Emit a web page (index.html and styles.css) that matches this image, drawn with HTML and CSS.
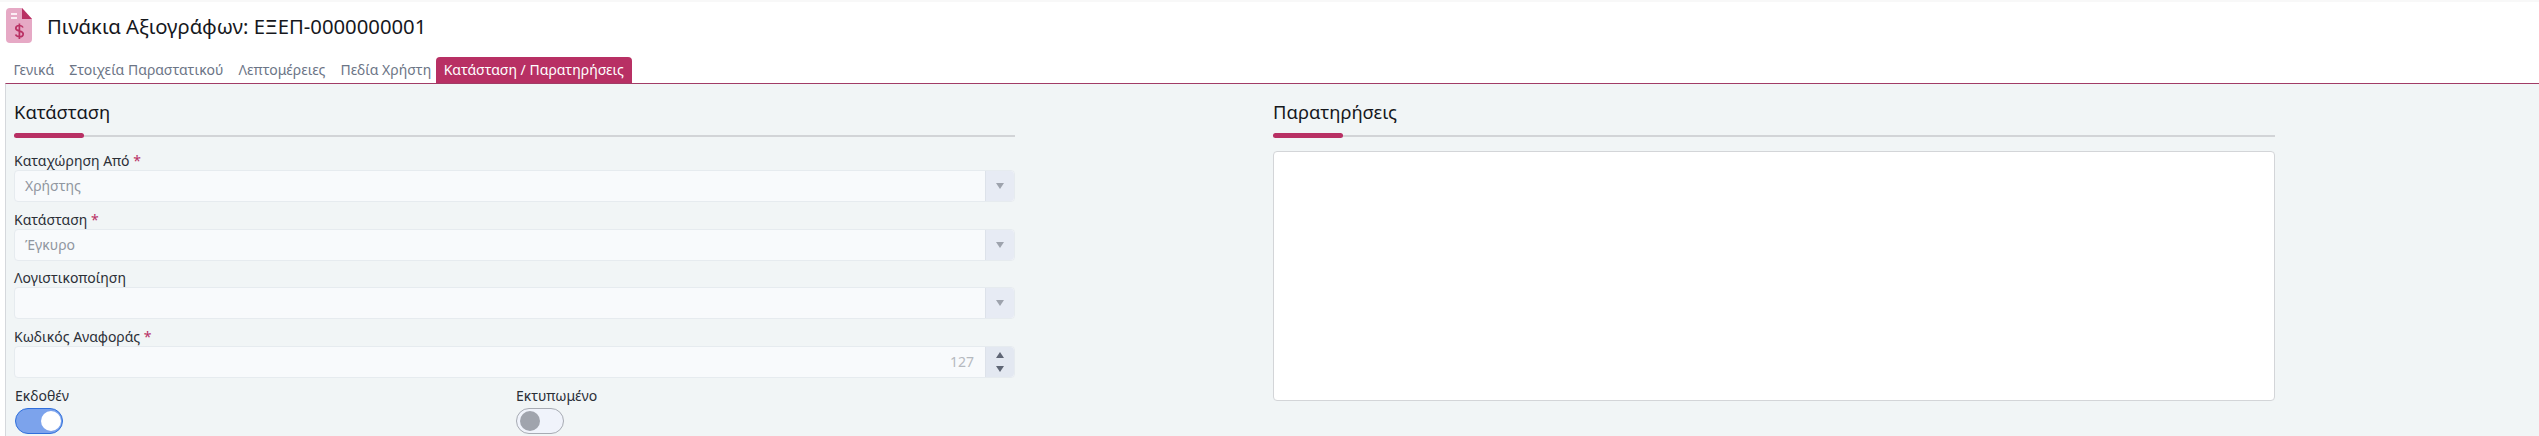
FILE: index.html
```html
<!DOCTYPE html>
<html lang="el">
<head>
  <meta charset="UTF-8" />
  <title>Πινάκια Αξιογράφων</title>
  <link rel="stylesheet" href="styles.css">
</head>
<body>
  <div class="page-header">
    <svg class="doc-icon" viewBox="0 0 26 35" width="26" height="35">
      <path d="M4 0H16L26 11V31a4 4 0 0 1-4 4H4a4 4 0 0 1-4-4V4a4 4 0 0 1 4-4Z" fill="#e6a9c5"/>
      <path d="M16 0L26 11H16Z" fill="#b93063"/>
      <rect x="5" y="5" width="6" height="2" fill="#fbeef4"/>
      <rect x="5" y="9" width="6" height="2" fill="#fbeef4"/>
      <path d="M17 19.5c-.6-1.4-2-2-3.6-2-2 0-3.6 1-3.6 2.8 0 3.8 7.4 1.8 7.4 5.6 0 1.8-1.7 2.8-3.7 2.8-1.8 0-3.3-.8-3.9-2.2M13.4 15.5v15.5" fill="none" stroke="#b93063" stroke-width="1.7"/>
    </svg>
    <h1>Πινάκια Αξιογράφων: ΕΞΕΠ-0000000001</h1>
  </div>

  <div class="tabs">
    <a class="tab">Γενικά</a>
    <a class="tab">Στοιχεία Παραστατικού</a>
    <a class="tab">Λεπτομέρειες</a>
    <a class="tab">Πεδία Χρήστη</a>
    <a class="tab active">Κατάσταση / Παρατηρήσεις</a>
  </div>

  <div class="panel">
    <section class="col">
      <h2 class="section-title">Κατάσταση</h2>
      <div class="section-rule"></div>

      <label class="field-label">Καταχώρηση Από <span class="req">*</span></label>
      <div class="control">
        <div class="value">Χρήστης</div>
        <div class="addon"><span class="caret-down"></span></div>
      </div>

      <label class="field-label">Κατάσταση <span class="req">*</span></label>
      <div class="control">
        <div class="value">Έγκυρο</div>
        <div class="addon"><span class="caret-down"></span></div>
      </div>

      <label class="field-label">Λογιστικοποίηση</label>
      <div class="control">
        <div class="value"></div>
        <div class="addon"><span class="caret-down"></span></div>
      </div>

      <label class="field-label">Κωδικός Αναφοράς <span class="req">*</span></label>
      <div class="control">
        <div class="value number">127</div>
        <div class="addon spinner">
          <span class="caret-up dark"></span>
          <span class="caret-down dark"></span>
        </div>
      </div>

      <div class="toggles">
        <div>
          <div class="toggle-label">Εκδοθέν</div>
          <div class="toggle on"><span class="knob"></span></div>
        </div>
        <div>
          <div class="toggle-label">Εκτυπωμένο</div>
          <div class="toggle"><span class="knob"></span></div>
        </div>
      </div>
    </section>

    <section class="col">
      <h2 class="section-title">Παρατηρήσεις</h2>
      <div class="section-rule"></div>
      <div class="notes"></div>
    </section>
  </div>
</body>
</html>
```

FILE: styles.css
```css
html, body {
  margin: 0;
  height: 436px;
  overflow: hidden;
}

body {
  font-family: "Noto Sans", "Open Sans", sans-serif;
  background: #fff;
  color: #212529;
}

.page-header {
  display: flex;
  align-items: center;
  gap: 15px;
  height: 57px;
  padding: 0 6px 8px;
  box-sizing: border-box;
  border-top: 2px solid #f8f8f8;
}

.page-header h1 {
  margin: 0;
  font-size: 20.3px;
  font-weight: 400;
  color: #16181d;
}

.tabs {
  display: flex;
  height: 26px;
  margin-left: 6px;
}

.tab {
  display: flex;
  align-items: center;
  padding: 0 7.5px 1px;
  font-size: 14px;
  color: #6c7586;
}

.tab.active {
  margin-left: -3px;
  padding: 0 8px 1px;
  background: #b83064;
  color: #fff;
  border-radius: 4px 4px 0 0;
}

.panel {
  display: grid;
  grid-template-columns: 1001px 1002px;
  column-gap: 258px;
  height: 353px;
  margin-left: 5px;
  padding: 0 0 0 8px;
  background: #f1f5f6;
  border-top: 1px solid #a13c66;
  border-left: 1px solid #d5d8dc;
  box-sizing: border-box;
}

.section-title {
  margin: 15px 0 0;
  font-size: 18.4px;
  line-height: 25px;
  font-weight: 400;
  color: #16181d;
}

.section-rule {
  position: relative;
  height: 2px;
  margin-top: 10px;
  background: #d2d4d7;
}

.section-rule::before {
  content: "";
  position: absolute;
  left: 0;
  top: -2px;
  width: 70px;
  height: 5px;
  background: #b83064;
  border-radius: 3px;
}

.section-title + .section-rule {
  margin-top: 11px;
}

.field-label {
  display: block;
  height: 18px;
  margin-top: 8.67px;
  font-size: 14px;
  line-height: 18px;
  color: #2b2f36;
}

.section-rule + .field-label {
  margin-top: 15px;
}

.req {
  color: #b83064;
}

.control {
  display: flex;
  height: 32px;
  box-sizing: border-box;
  background: #f8fafc;
  border: 1px solid #e6ebef;
  border-radius: 4px;
}

.value {
  flex: 1;
  padding: 0 10px;
  font-size: 14px;
  line-height: 30px;
  color: #9096a0;
}

.value.number {
  text-align: right;
  padding-right: 11px;
  color: #b5b9bf;
}

.addon {
  display: flex;
  flex-direction: column;
  align-items: center;
  justify-content: center;
  width: 28px;
  background: #e7ebf4;
  border-left: 1px solid #dde2ea;
  border-radius: 0 4px 4px 0;
}

.spinner {
  gap: 8px;
  background: #e3e8f1;
}

.caret-down,
.caret-up {
  width: 0;
  height: 0;
  border-left: 4px solid transparent;
  border-right: 4px solid transparent;
}

.caret-down {
  border-top: 6px solid #9ea3ad;
}

.caret-up {
  border-bottom: 6px solid #9ea3ad;
}

.caret-down.dark {
  border-top-color: #5f6675;
}

.caret-up.dark {
  border-bottom-color: #5f6675;
}

.toggles {
  display: grid;
  grid-template-columns: 502px 1fr;
  margin-top: 9px;
  padding-left: 1px;
}

.toggles > div:last-child {
  margin-left: -1px;
}

.toggle-label {
  font-size: 14px;
  line-height: 18px;
  color: #2b2f36;
}

.toggle {
  display: flex;
  align-items: center;
  width: 48px;
  height: 26px;
  margin-top: 3px;
  padding: 0 3px;
  box-sizing: border-box;
  background: #f0f3fb;
  border: 1px solid #a7abb3;
  border-radius: 13px;
}

.toggle .knob {
  width: 20px;
  height: 20px;
  border-radius: 50%;
  background: #a0a4ad;
}

.toggle.on {
  justify-content: flex-end;
  padding: 0 1px;
  background: #7ca3ec;
  border-color: #2f6fdc;
}

.toggle.on .knob {
  background: #fff;
}

.notes {
  height: 250px;
  margin-top: 14px;
  box-sizing: border-box;
  background: #fff;
  border: 1px solid #d3d5d8;
  border-radius: 4px;
}
```
